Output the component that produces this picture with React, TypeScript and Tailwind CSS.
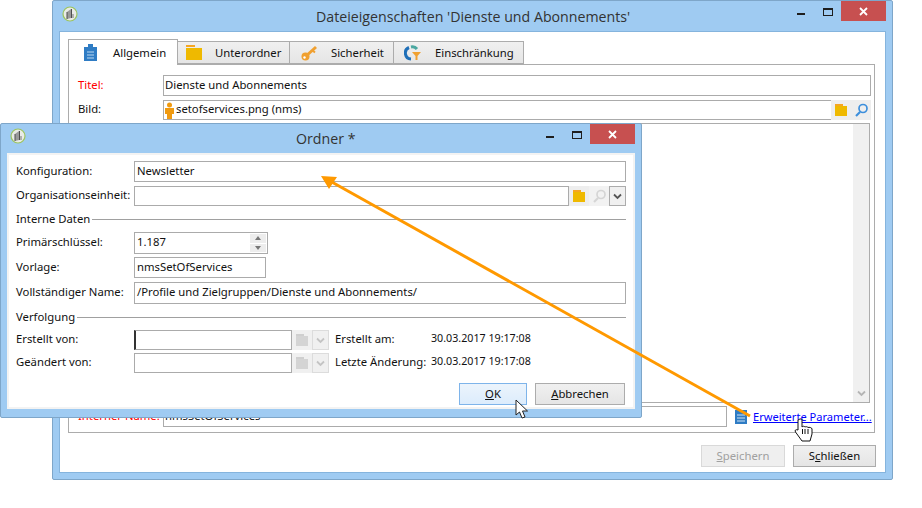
import React from "react";

const Folder = ({ dim = false }: { dim?: boolean }) => (
  <svg width="13" height="12" viewBox="0 0 13 12">
    <path d="M0 0h8v2H0z" fill={dim ? "#cfcfcf" : "#f5a623"} />
    <path d="M0 2h12v10H0z" fill={dim ? "#d4d4d4" : "#efb900"} />
  </svg>
);

const Lens = ({ dim = false }: { dim?: boolean }) => (
  <svg width="13" height="14" viewBox="0 0 13 14">
    <circle cx="8" cy="5.500" r="4" fill="none" stroke={dim ? "#d5d5d5" : "#3d8fdc"} strokeWidth="1.7" />
    <path d="M5 9L1 13" stroke={dim ? "#d5d5d5" : "#3d8fdc"} strokeWidth="2.2" />
  </svg>
);

const Chevron = ({ color }: { color: string }) => (
  <svg width="9" height="7" viewBox="0 0 9 7">
    <path d="M1 1.500L4.500 5L8 1.500" fill="none" stroke={color} strokeWidth="1.8" />
  </svg>
);

const Logo = () => (
  <svg width="16" height="16" viewBox="0 0 16 16">
    <circle cx="8" cy="8" r="7" fill="#e9ebe6" stroke="#9cc45f" strokeWidth="1.2" />
    <path d="M5 6l4-3v9l-4 1z" fill="#9a9a9a" />
    <path d="M9.500 3v9M5 6v7" stroke="#4e4e4e" strokeWidth="1" fill="none" />
    <path d="M11 8v4" stroke="#8a8a8a" strokeWidth="1.2" />
  </svg>
);

const WinControls = () => (
  <div className="flex items-start">
    <div className="w-[8px] h-[2px] bg-[#1e1e1e] mt-[12px] mr-[18px]" />
    <div className="w-[10px] h-[8px] border border-[#1e1e1e] border-t-2 mt-[7px] mr-[8px]" />
    <div className="w-[45px] h-[20px] bg-[#c75050] flex items-center justify-center">
      <svg width="9" height="9" viewBox="0 0 9 9">
        <path d="M1 1l7 7M8 1L1 8" stroke="#fff" strokeWidth="1.8" />
      </svg>
    </div>
  </div>
);

const Tab = ({ w, icon, label, pad, gap, active = false }: { w: string; icon: React.ReactNode; label: string; pad: string; gap: string; active?: boolean }) => (
  <div
    className={`${w} ${pad} flex items-center border border-[#acacac] ${
      active ? "h-[26px] -mb-px bg-white border-b-0 z-10 relative" : "h-[23px] bg-gradient-to-b from-[#f0f0f0] to-[#e5e5e5] -ml-px"
    }`}
  >
    <div className={`${gap} flex shrink-0`}>{icon}</div>
    <span>{label}</span>
  </div>
);

const inputCls = "border border-[#ababab] bg-white flex items-center overflow-hidden whitespace-nowrap pb-[2px]";

const Label = ({ children, w = "w-[118px]", red = false }: { children: React.ReactNode; w?: string; red?: boolean }) => (
  <div className={`${w} shrink-0 whitespace-nowrap pb-[2px] ${red ? "text-[#ff0000]" : ""}`}>{children}</div>
);

const Sep = ({ label }: { label: string }) => (
  <div className="flex items-center gap-[2px] h-[13px]">
    <span className="pb-[2px]">{label}</span>
    <div className="flex-1 h-px bg-[#a0a0a0]" />
  </div>
);

const LinkField = ({ caret = false }: { caret?: boolean }) => (
  <div className="flex h-[20px] w-[195px]">
    <div className={`${inputCls} w-[158px] ${caret ? "border-l-2 border-l-[#333]" : ""}`} />
    <div className="w-[20px] bg-[#f0f0f0] flex items-center justify-center"><Folder dim /></div>
    <div className="w-[17px] bg-[#f0f0f0] border border-[#dcdcdc] flex items-center justify-center"><Chevron color="#c4c4c4" /></div>
  </div>
);

const Btn = ({ w, u, rest, pre = "", variant = "normal" }: { w: string; u: string; rest: string; pre?: string; variant?: "normal" | "focus" | "off" }) => (
  <div
    className={`${w} h-[22px] flex items-center justify-center border ${
      variant === "focus"
        ? "border-[#7eb4ea] bg-gradient-to-b from-[#ecf4fc] to-[#dcecfc]"
        : variant === "off"
          ? "border-[#d9d9d9] bg-[#efefef] text-[#a0a0a0]"
          : "border-[#acacac] bg-gradient-to-b from-[#f0f0f0] to-[#e5e5e5]"
    }`}
  >
    {pre}
    <span className="underline">{u}</span>
    {rest}
  </div>
);

export default function App() {
  return (
    <div className="relative w-[922px] h-[508px] bg-white overflow-hidden text-[11.3px] leading-none text-[#111] font-['Noto_Sans',sans-serif]">
      {/* Main window */}
      <div className="absolute left-[52px] top-0 w-[841px] h-[480px] bg-[#9fcbf2] border border-[#7ea6c9] rounded-[2px] flex flex-col">
        <div className="relative h-[30px] shrink-0 flex items-start justify-between pl-[9px] pr-[6px]">
          <div className="pt-[5px]"><Logo /></div>
          <div className="absolute left-[263px] top-[6px] text-[14.2px] leading-[20px] text-[#333] whitespace-nowrap font-['Open_Sans',sans-serif]">Dateieigenschaften 'Dienste und Abonnements'</div>
          <WinControls />
        </div>
        <div className="mx-[6px] h-[442px] border border-[#85b4dd] bg-white pl-[8px] pr-[10px] pt-[7px] flex flex-col">
          <div className="flex items-end h-[25px]">
            <Tab active w="w-[110px]" pad="pl-[15px]" gap="w-[29px]" label="Allgemein" icon={
              <svg width="13" height="17" viewBox="0 0 13 17"><path d="M0 3h13v14H0z" fill="#2f7cc4" /><path d="M4 0h5v4H4z" fill="#2f7cc4" /><path d="M3 8h7M3 11h7M3 14h7" stroke="#bcd8f0" /></svg>
            } />
            <Tab w="w-[113px]" pad="pl-[8px]" gap="w-[29px]" label="Unterordner" icon={
              <svg width="16" height="15" viewBox="0 0 16 15"><path d="M0 0h9v2H0z" fill="#f5a623" /><path d="M0 3h16v12H0z" fill="#efb900" /></svg>
            } />
            <Tab w="w-[105px]" pad="pl-[11px]" gap="w-[30px]" label="Sicherheit" icon={
              <svg width="18" height="16" viewBox="0 0 18 16"><path d="M4 12L15 2" stroke="#f0a030" strokeWidth="3" /><circle cx="4.500" cy="11.500" r="4" fill="#f0a030" /><circle cx="3.500" cy="12.500" r="1.200" fill="#fff" /><path d="M11 5l3 2.500" stroke="#f0a030" strokeWidth="2" /></svg>
            } />
            <Tab w="w-[131px]" pad="pl-[10px]" gap="w-[31px]" label="Einschränkung" icon={
              <svg width="18" height="16" viewBox="0 0 18 16"><path d="M7 2a6 6 0 0 1 6 2" fill="none" stroke="#4aa7a0" strokeWidth="3" /><path d="M5 2.500a6 6 0 0 0 2 11.500" fill="none" stroke="#1f6fb8" strokeWidth="3" /><path d="M8 7h9l-3.500 4v4h-2v-4z" fill="#f0a030" /></svg>
            } />
          </div>
          <div className="h-[369px] border border-[#acacac] pl-[9px] pr-[3px] pt-[10px] flex flex-col">
            <div className="flex items-center h-[21px]">
              <Label w="w-[85px]" red>Titel:</Label>
              <div className={`${inputCls} flex-1 h-full pl-[1px]`}>Dienste und Abonnements</div>
            </div>
            <div className="flex items-center h-[20px] mt-[4px]">
              <Label w="w-[85px]">Bild:</Label>
              <div className={`${inputCls} flex-1 h-full pl-[1px]`}>
                <svg width="9" height="17" viewBox="0 0 9 17" className="shrink-0 mr-[2px] -mb-[2px]"><circle cx="4.500" cy="3" r="2.500" fill="#f09a10" /><path d="M0 6h9v6H7v5H2v-5H0z" fill="#f09a10" /></svg>
                <span>setofservices.png (nms)</span>
              </div>
              <div className="w-[40px] h-full -ml-[40px] bg-[#eeeeee] flex items-center justify-around relative"><Folder /><Lens /></div>
            </div>
            <div className="h-[280px] ml-[85px] mr-px mt-[3px] border border-[#acacac] flex justify-end">
              <div className="w-[16px] bg-[#f0f0f0] flex items-end justify-center pb-[5px]"><Chevron color="#b5b5b5" /></div>
            </div>
            <div className="flex items-center h-[21px] mt-[3px]">
              <Label w="w-[85px]" red>Interner Name:</Label>
              <div className={`${inputCls} w-[564px] shrink-0 h-full pl-[1px]`}>nmsSetOfServices</div>
              <svg width="12" height="14" viewBox="0 0 12 14" className="ml-[8px] shrink-0"><path d="M0 0h12v14H0z" fill="#2f7cc4" /><path d="M2 5h8M2 8h8M2 11h8" stroke="#cfe3f5" /></svg>
              <div className="ml-[6px] text-[#0000ff] underline whitespace-nowrap text-[11.1px]">Erweiterte Parameter...</div>
            </div>
          </div>
          <div className="flex justify-end gap-[8px] mt-[12px] -mr-px">
            <Btn w="w-[84px]" u="S" rest="peichern" variant="off" />
            <Btn w="w-[83px]" pre="S" u="c" rest="hließen" />
          </div>
        </div>
      </div>

      {/* Dialog */}
      <div className="absolute left-0 top-[123px] w-[642px] h-[295px] bg-[#9fcbf2] border border-[#7ea6c9] rounded-[2px] flex flex-col">
        <div className="relative h-[29px] shrink-0 flex items-start justify-between pl-[9px] pr-[6px]">
          <div className="pt-[4px]"><Logo /></div>
          <div className="absolute left-[295px] top-[5px] text-[14.2px] leading-[20px] text-[#333] whitespace-nowrap font-['Open_Sans',sans-serif]">Ordner *</div>
          <WinControls />
        </div>
        <div className="mx-[6px] h-[256px] bg-white border-[2px] border-[#f3f3f3] pl-[7px] pr-[7px] pt-[6px] flex flex-col">
          <div className="flex items-center h-[21px]">
            <Label>Konfiguration:</Label>
            <div className={`${inputCls} flex-1 h-full pl-[2px]`}>Newsletter</div>
          </div>
          <div className="flex items-center h-[20px] mt-[4px]">
            <Label>Organisationseinheit:</Label>
            <div className={`${inputCls} flex-1 h-full`} />
            <div className="w-[20px] h-full bg-[#eeeeee] flex items-center justify-center"><Folder /></div>
            <div className="w-[20px] h-full bg-[#f2f2f2] flex items-center justify-center"><Lens dim /></div>
            <div className="w-[17px] h-full bg-[#f0f0f0] border border-[#acacac] flex items-center justify-center"><Chevron color="#555" /></div>
          </div>
          <div className="mt-[7px]"><Sep label="Interne Daten" /></div>
          <div className="flex items-center h-[22px] mt-[6px]">
            <Label>Primärschlüssel:</Label>
            <div className={`${inputCls} w-[134px] h-full justify-between pl-[2px] pr-px`}>
              <span>1.187</span>
              <div className="w-[16px] h-[18px] -mb-[2px] flex flex-col gap-px">
                <div className="flex-1 bg-[#ededed] flex items-center justify-center"><div className="border-x-[3px] border-x-transparent border-b-[4px] border-b-[#777]" /></div>
                <div className="flex-1 bg-[#ededed] flex items-center justify-center"><div className="border-x-[3px] border-x-transparent border-t-[4px] border-t-[#777]" /></div>
              </div>
            </div>
          </div>
          <div className="flex items-center h-[21px] mt-[3px]">
            <Label>Vorlage:</Label>
            <div className={`${inputCls} w-[132px] h-full pl-[2px]`}>nmsSetOfServices</div>
          </div>
          <div className="flex items-center h-[22px] mt-[4px]">
            <Label>Vollständiger Name:</Label>
            <div className={`${inputCls} flex-1 h-full pl-[2px]`}>/Profile und Zielgruppen/Dienste und Abonnements/</div>
          </div>
          <div className="mt-[7px]"><Sep label="Verfolgung" /></div>
          <div className="flex items-center mt-[6px]">
            <Label>Erstellt von:</Label>
            <LinkField caret />
            <div className="w-[6px]" />
            <Label w="w-[96px]">Erstellt am:</Label>
            <span className="-mt-[3px] text-[10.7px]">30.03.2017 19:17:08</span>
          </div>
          <div className="flex items-center mt-[3px]">
            <Label>Geändert von:</Label>
            <LinkField />
            <div className="w-[6px]" />
            <Label w="w-[96px]">Letzte Änderung:</Label>
            <span className="-mt-[3px] text-[10.7px]">30.03.2017 19:17:08</span>
          </div>
          <div className="flex justify-end gap-[8px] mt-[10px] mr-px">
            <Btn w="w-[68px]" u="O" rest="K" variant="focus" />
            <Btn w="w-[90px]" u="A" rest="bbrechen" />
          </div>
        </div>
      </div>

      {/* Annotation arrow */}
      <svg className="absolute left-0 top-0 pointer-events-none" width="922" height="508" viewBox="0 0 922 508">
        <path d="M750 416L330 181" stroke="#ff9900" strokeWidth="3" fill="none" />
        <path d="M321 176L337 177L329 189z" fill="#ff9900" />
      </svg>

      {/* Cursors */}
      <svg className="absolute left-[515px] top-[399px]" width="14" height="20" viewBox="0 0 14 20">
        <path d="M1 1v15l3.500-3 2.500 6 3-1-2.500-6h5z" fill="#fff" stroke="#222" strokeWidth="1" />
      </svg>
      <svg className="absolute left-[794px] top-[418px]" width="19" height="24" viewBox="0 0 19 24">
        <path d="M5 1.500c1-1 3-.5 3 .5v7c1-1 2-1 3 0 1-.5 2-.5 3 .5 1-.5 4 0 4 1.500v5l-2 7H8L1.500 14c-1-1.500 0-3 2.500-2V2z" fill="#fff" stroke="#111" strokeWidth="1" />
        <path d="M8.500 11v5M11 11v5M14 11v5" stroke="#111" strokeWidth="1" />
      </svg>
    </div>
  );
}
